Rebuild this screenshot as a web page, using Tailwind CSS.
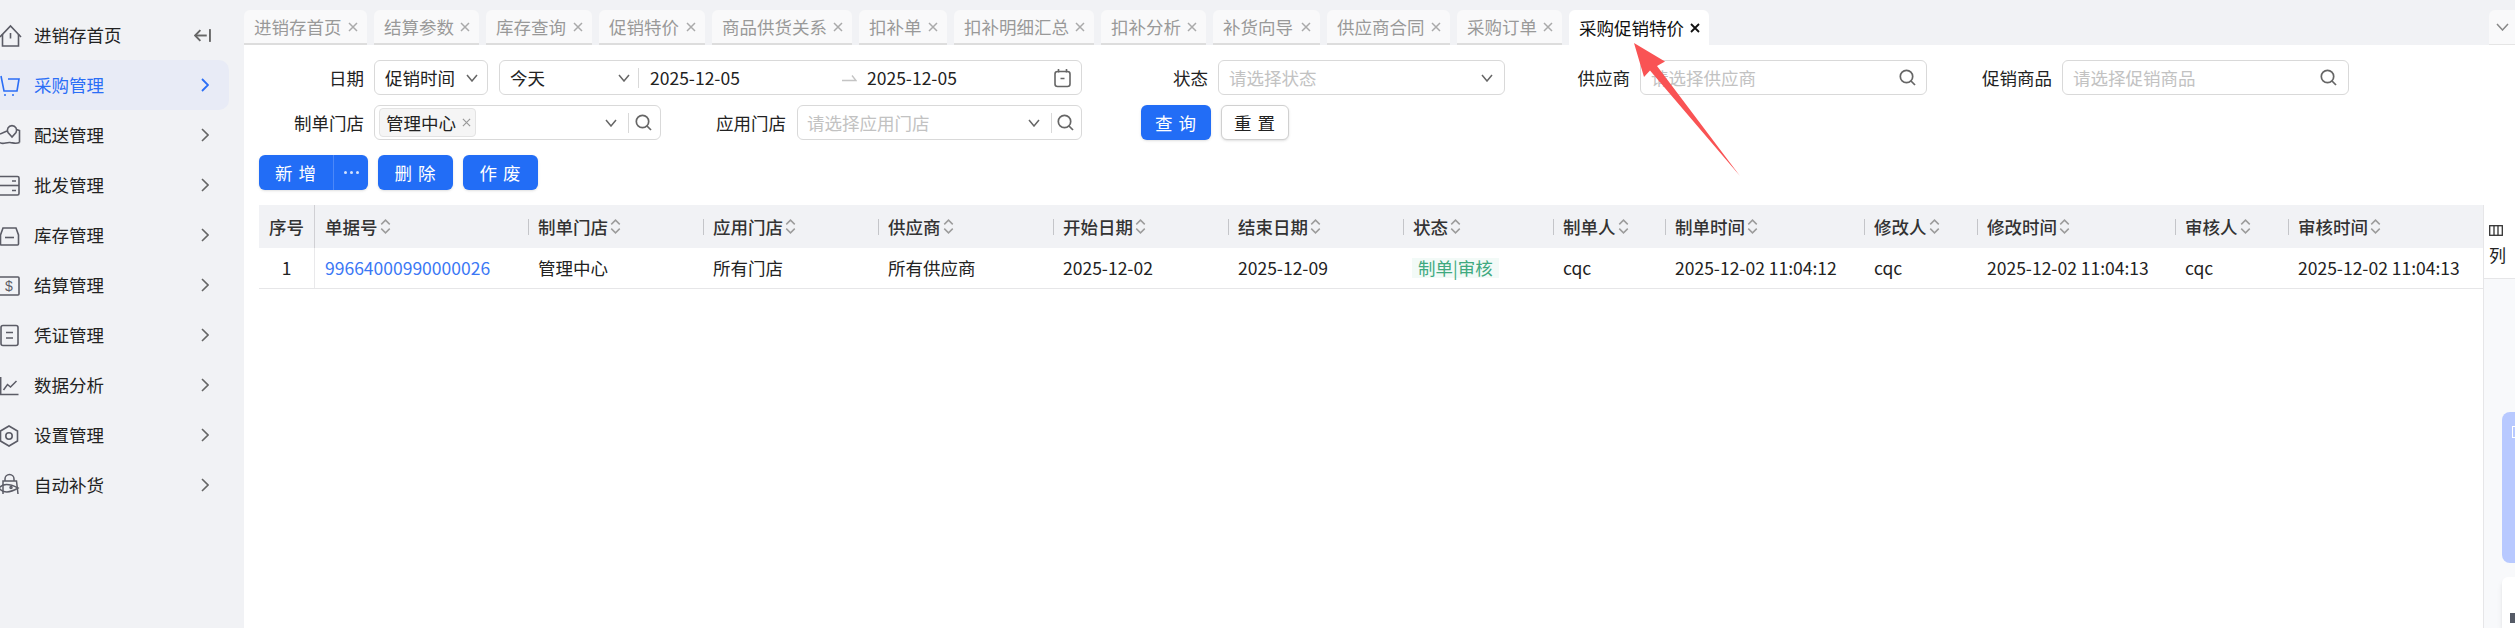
<!DOCTYPE html>
<html lang="zh">
<head>
<meta charset="utf-8">
<script src="https://cdn.jsdelivr.net/npm/@tailwindcss/browser@4"></script>
<title>采购促销特价</title>
</head>
<body class="bg-white">
<div class="relative flex w-[2515px] h-[628px] overflow-hidden bg-white text-[17.5px] leading-none text-[#222] [font-family:'Noto_Sans_CJK_SC',sans-serif]">

  <!-- Sidebar -->
  <aside class="w-[244px] shrink-0 h-full bg-[#f1f2f5] pt-[10px]">
    <div class="flex items-center h-[50px] w-[229px] pr-[18px]">
      <svg class="w-[24px] h-[24px] mr-[10px] overflow-visible" viewBox="0 0 24 24" fill="none" stroke="#5b5c66" stroke-width="1.6"><path d="M0 14 L10.5 3 L21 14"/><path d="M2.5 11 V23 H18.5 V11"/><path d="M10.5 10 v5.5"/></svg>
      <span class="flex-1">进销存首页</span>
      <svg class="w-[17px] h-[15px]" viewBox="0 0 16 14" fill="none" stroke="#666" stroke-width="1.8"><path d="M15 1 V13"/><path d="M12 7 H1"/><path d="M6 2 L1 7 L6 12"/></svg>
    </div>
    <div class="flex items-center h-[50px] w-[229px] pr-[20px] bg-[#e8ebf6] rounded-r-[10px] text-[#2b6ef6]">
      <svg class="w-[24px] h-[24px] mr-[10px] overflow-visible" viewBox="0 0 24 24" fill="none" stroke="#2b6ef6" stroke-width="1.6"><path d="M1 3 L4 18 H17 L19 6 H8"/><circle cx="5" cy="22" r="1" fill="#2b6ef6" stroke="none"/><circle cx="13" cy="22" r="1" fill="#2b6ef6" stroke="none"/></svg>
      <span class="flex-1">采购管理</span>
      <svg class="w-[8px] h-[14px]" viewBox="0 0 8 14" fill="none" stroke="#2b6ef6" stroke-width="1.8"><path d="M1 1 L7 7 L1 13"/></svg>
    </div>
    <div class="flex items-center h-[50px] w-[229px] pr-[20px]">
      <svg class="w-[24px] h-[24px] mr-[10px] overflow-visible" viewBox="0 0 24 24" fill="none" stroke="#5b5c66" stroke-width="1.6"><path d="M0 11 L7 8"/><path d="M16.5 6.5 L19.5 7.5 V19.5"/><path d="M0 19.5 C3 22 6 19 10 19.5 S16 21 19.5 19.5"/><path d="M12 14 L8 9.5 A4.6 4.6 0 1 1 16 9.5 Z"/></svg>
      <span class="flex-1">配送管理</span>
      <svg class="w-[8px] h-[14px]" viewBox="0 0 8 14" fill="none" stroke="#666" stroke-width="1.6"><path d="M1 1 L7 7 L1 13"/></svg>
    </div>
    <div class="flex items-center h-[50px] w-[229px] pr-[20px]">
      <svg class="w-[24px] h-[24px] mr-[10px] overflow-visible" viewBox="0 0 24 24" fill="none" stroke="#5b5c66" stroke-width="1.6"><rect x="-3" y="3.5" width="22" height="18.5" rx="1.5"/><path d="M-3 12.5 H19"/><path d="M12 8 h4 M12 17.5 h4"/></svg>
      <span class="flex-1">批发管理</span>
      <svg class="w-[8px] h-[14px]" viewBox="0 0 8 14" fill="none" stroke="#666" stroke-width="1.6"><path d="M1 1 L7 7 L1 13"/></svg>
    </div>
    <div class="flex items-center h-[50px] w-[229px] pr-[20px]">
      <svg class="w-[24px] h-[24px] mr-[10px] overflow-visible" viewBox="0 0 24 24" fill="none" stroke="#5b5c66" stroke-width="1.6"><path d="M0.5 12 L3 5 H16 L18.5 12 V21 A1 1 0 0 1 17.5 22 H1.5 A1 1 0 0 1 0.5 21 Z"/><path d="M5 14.5 H14"/></svg>
      <span class="flex-1">库存管理</span>
      <svg class="w-[8px] h-[14px]" viewBox="0 0 8 14" fill="none" stroke="#666" stroke-width="1.6"><path d="M1 1 L7 7 L1 13"/></svg>
    </div>
    <div class="flex items-center h-[50px] w-[229px] pr-[20px]">
      <svg class="w-[24px] h-[24px] mr-[10px] overflow-visible" viewBox="0 0 24 24" fill="none" stroke="#5b5c66" stroke-width="1.6"><rect x="-3" y="4" width="22" height="18" rx="1"/><text x="9" y="18" text-anchor="middle" font-size="14" font-family="Liberation Sans" fill="#5b5c66" stroke="none">$</text></svg>
      <span class="flex-1">结算管理</span>
      <svg class="w-[8px] h-[14px]" viewBox="0 0 8 14" fill="none" stroke="#666" stroke-width="1.6"><path d="M1 1 L7 7 L1 13"/></svg>
    </div>
    <div class="flex items-center h-[50px] w-[229px] pr-[20px]">
      <svg class="w-[24px] h-[24px] mr-[10px] overflow-visible" viewBox="0 0 24 24" fill="none" stroke="#5b5c66" stroke-width="1.6"><rect x="1" y="2.5" width="17" height="20" rx="2"/><path d="M6 9.5 H13 M6 15 H13"/></svg>
      <span class="flex-1">凭证管理</span>
      <svg class="w-[8px] h-[14px]" viewBox="0 0 8 14" fill="none" stroke="#666" stroke-width="1.6"><path d="M1 1 L7 7 L1 13"/></svg>
    </div>
    <div class="flex items-center h-[50px] w-[229px] pr-[20px]">
      <svg class="w-[24px] h-[24px] mr-[10px] overflow-visible" viewBox="0 0 24 24" fill="none" stroke="#5b5c66" stroke-width="1.5"><path d="M0.7 4 V21.5 H18.5"/><path d="M3.5 17 L7.5 11.5 L10.5 14 L16.5 8"/></svg>
      <span class="flex-1">数据分析</span>
      <svg class="w-[8px] h-[14px]" viewBox="0 0 8 14" fill="none" stroke="#666" stroke-width="1.6"><path d="M1 1 L7 7 L1 13"/></svg>
    </div>
    <div class="flex items-center h-[50px] w-[229px] pr-[20px]">
      <svg class="w-[24px] h-[24px] mr-[10px] overflow-visible" viewBox="0 0 24 24" fill="none" stroke="#5b5c66" stroke-width="1.6"><path d="M9 3 L17.5 8 V18 L9 23 L0.5 18 V8 Z"/><circle cx="9" cy="13" r="3.2"/></svg>
      <span class="flex-1">设置管理</span>
      <svg class="w-[8px] h-[14px]" viewBox="0 0 8 14" fill="none" stroke="#666" stroke-width="1.6"><path d="M1 1 L7 7 L1 13"/></svg>
    </div>
    <div class="flex items-center h-[50px] w-[229px] pr-[20px]">
      <svg class="w-[24px] h-[24px] mr-[10px] overflow-visible" viewBox="0 0 24 24" fill="none" stroke="#5b5c66" stroke-width="1.5"><path d="M5 8 V6 A4.5 4.5 0 0 1 14 6 V8"/><path d="M3 21 V8 H16.5 L18 21"/><path d="M-1 15 C3 10 10 11 18 15 C10 20 3 20 -1 15 Z"/><circle cx="11" cy="14.5" r="1"/></svg>
      <span class="flex-1">自动补货</span>
      <svg class="w-[8px] h-[14px]" viewBox="0 0 8 14" fill="none" stroke="#666" stroke-width="1.6"><path d="M1 1 L7 7 L1 13"/></svg>
    </div>
  </aside>

  <!-- Main -->
  <main class="flex-1 min-w-0 flex flex-col h-full">
    <!-- Tabs -->
    <div class="flex items-end h-[45px] shrink-0 gap-[7px] bg-[#f1f2f5] text-[#999]">
      <div class="flex items-center justify-between w-[123px] h-[35px] pl-[10px] pr-[9px] bg-[#f9f9fa] rounded-t-[6px] border-b-2 border-[#dddddd]"><span>进销存首页</span><svg class="w-[10px] h-[10px]" viewBox="0 0 10 10" stroke="#aaa" stroke-width="1.5"><path d="M1 1 L9 9 M9 1 L1 9"/></svg></div>
      <div class="flex items-center justify-between w-[105px] h-[35px] pl-[10px] pr-[9px] bg-[#f9f9fa] rounded-t-[6px] border-b-2 border-[#dddddd]"><span>结算参数</span><svg class="w-[10px] h-[10px]" viewBox="0 0 10 10" stroke="#aaa" stroke-width="1.5"><path d="M1 1 L9 9 M9 1 L1 9"/></svg></div>
      <div class="flex items-center justify-between w-[106px] h-[35px] pl-[10px] pr-[9px] bg-[#f9f9fa] rounded-t-[6px] border-b-2 border-[#dddddd]"><span>库存查询</span><svg class="w-[10px] h-[10px]" viewBox="0 0 10 10" stroke="#aaa" stroke-width="1.5"><path d="M1 1 L9 9 M9 1 L1 9"/></svg></div>
      <div class="flex items-center justify-between w-[106px] h-[35px] pl-[10px] pr-[9px] bg-[#f9f9fa] rounded-t-[6px] border-b-2 border-[#dddddd]"><span>促销特价</span><svg class="w-[10px] h-[10px]" viewBox="0 0 10 10" stroke="#aaa" stroke-width="1.5"><path d="M1 1 L9 9 M9 1 L1 9"/></svg></div>
      <div class="flex items-center justify-between w-[140px] h-[35px] pl-[10px] pr-[9px] bg-[#f9f9fa] rounded-t-[6px] border-b-2 border-[#dddddd]"><span>商品供货关系</span><svg class="w-[10px] h-[10px]" viewBox="0 0 10 10" stroke="#aaa" stroke-width="1.5"><path d="M1 1 L9 9 M9 1 L1 9"/></svg></div>
      <div class="flex items-center justify-between w-[88px] h-[35px] pl-[10px] pr-[9px] bg-[#f9f9fa] rounded-t-[6px] border-b-2 border-[#dddddd]"><span>扣补单</span><svg class="w-[10px] h-[10px]" viewBox="0 0 10 10" stroke="#aaa" stroke-width="1.5"><path d="M1 1 L9 9 M9 1 L1 9"/></svg></div>
      <div class="flex items-center justify-between w-[140px] h-[35px] pl-[10px] pr-[9px] bg-[#f9f9fa] rounded-t-[6px] border-b-2 border-[#dddddd]"><span>扣补明细汇总</span><svg class="w-[10px] h-[10px]" viewBox="0 0 10 10" stroke="#aaa" stroke-width="1.5"><path d="M1 1 L9 9 M9 1 L1 9"/></svg></div>
      <div class="flex items-center justify-between w-[105px] h-[35px] pl-[10px] pr-[9px] bg-[#f9f9fa] rounded-t-[6px] border-b-2 border-[#dddddd]"><span>扣补分析</span><svg class="w-[10px] h-[10px]" viewBox="0 0 10 10" stroke="#aaa" stroke-width="1.5"><path d="M1 1 L9 9 M9 1 L1 9"/></svg></div>
      <div class="flex items-center justify-between w-[107px] h-[35px] pl-[10px] pr-[9px] bg-[#f9f9fa] rounded-t-[6px] border-b-2 border-[#dddddd]"><span>补货向导</span><svg class="w-[10px] h-[10px]" viewBox="0 0 10 10" stroke="#aaa" stroke-width="1.5"><path d="M1 1 L9 9 M9 1 L1 9"/></svg></div>
      <div class="flex items-center justify-between w-[123px] h-[35px] pl-[10px] pr-[9px] bg-[#f9f9fa] rounded-t-[6px] border-b-2 border-[#dddddd]"><span>供应商合同</span><svg class="w-[10px] h-[10px]" viewBox="0 0 10 10" stroke="#aaa" stroke-width="1.5"><path d="M1 1 L9 9 M9 1 L1 9"/></svg></div>
      <div class="flex items-center justify-between w-[105px] h-[35px] pl-[10px] pr-[9px] bg-[#f9f9fa] rounded-t-[6px] border-b-2 border-[#dddddd]"><span>采购订单</span><svg class="w-[10px] h-[10px]" viewBox="0 0 10 10" stroke="#aaa" stroke-width="1.5"><path d="M1 1 L9 9 M9 1 L1 9"/></svg></div>
      <div class="flex items-center justify-between w-[140px] h-[35px] pl-[10px] pr-[9px] bg-white rounded-t-[6px] text-[#111]"><span>采购促销特价</span><svg class="w-[10px] h-[10px]" viewBox="0 0 10 10" stroke="#111" stroke-width="1.8"><path d="M1 1 L9 9 M9 1 L1 9"/></svg></div>
      <div class="flex items-center justify-center ml-auto w-[26px] h-[35px] bg-[#f9f9fa] rounded-tl-[6px] border-b border-[#e5e5e5]"><svg class="w-[13px] h-[8px]" viewBox="0 0 13 8" fill="none" stroke="#888" stroke-width="1.5"><path d="M1 1 L6.5 7 L12 1"/></svg></div>
    </div>

    <!-- Filter row 1 -->
    <div class="flex items-center h-[35px] mt-[15px] shrink-0">
      <label class="w-[120px] text-right mr-[10px]">日期</label>
      <div class="flex items-center justify-between w-[114px] h-[35px] pl-[10px] pr-[9px] border border-[#d9d9d9] rounded-[6px]"><span>促销时间</span><svg class="w-[12px] h-[8px]" viewBox="0 0 12 8" fill="none" stroke="#666" stroke-width="1.5"><path d="M1 1 L6 7 L11 1"/></svg></div>
      <div class="flex items-center w-[583px] h-[35px] ml-[11px] pl-[10px] pr-[10px] border border-[#d9d9d9] rounded-[6px]">
        <span class="w-[108px]">今天</span>
        <svg class="w-[12px] h-[8px]" viewBox="0 0 12 8" fill="none" stroke="#666" stroke-width="1.5"><path d="M1 1 L6 7 L11 1"/></svg>
        <span class="w-px h-[20px] bg-[#d9d9d9] ml-[8px] mr-[11px]"></span>
        <span class="w-[192px]">2025-12-05</span>
        <svg class="w-[15px] h-[8px] mr-[10px]" viewBox="0 0 15 8" fill="none" stroke="#c4c4c4" stroke-width="1.4"><path d="M0 6.5 H14 L10 1.5"/></svg>
        <span class="flex-1">2025-12-05</span>
        <svg class="w-[17px] h-[20px]" viewBox="0 0 17 20" fill="none" stroke="#666" stroke-width="1.6"><rect x="1" y="3.5" width="15" height="15" rx="2.5"/><path d="M4.5 1 V4.5 M12.5 1 V4.5 M6.5 10.5 H10.5"/></svg>
      </div>
      <label class="w-[126px] text-right mr-[10px]">状态</label>
      <div class="flex items-center justify-between w-[287px] h-[35px] pl-[10px] pr-[11px] border border-[#d9d9d9] rounded-[6px] text-[#c2c2c2]"><span>请选择状态</span><svg class="w-[12px] h-[8px]" viewBox="0 0 12 8" fill="none" stroke="#666" stroke-width="1.5"><path d="M1 1 L6 7 L11 1"/></svg></div>
      <label class="w-[125px] text-right mr-[10px]">供应商</label>
      <div class="flex items-center justify-between w-[287px] h-[35px] pl-[10px] pr-[10px] border border-[#d9d9d9] rounded-[6px] text-[#c2c2c2]"><span>请选择供应商</span><svg class="w-[17px] h-[17px]" viewBox="0 0 17 17" fill="none" stroke="#666" stroke-width="1.7"><circle cx="7.5" cy="7.5" r="6.2"/><path d="M12 12 L16 16"/></svg></div>
      <label class="w-[125px] text-right mr-[10px]">促销商品</label>
      <div class="flex items-center justify-between w-[287px] h-[35px] pl-[10px] pr-[11px] border border-[#d9d9d9] rounded-[6px] text-[#c2c2c2]"><span>请选择促销商品</span><svg class="w-[17px] h-[17px]" viewBox="0 0 17 17" fill="none" stroke="#666" stroke-width="1.7"><circle cx="7.5" cy="7.5" r="6.2"/><path d="M12 12 L16 16"/></svg></div>
    </div>

    <!-- Filter row 2 -->
    <div class="flex items-center h-[35px] mt-[10px] shrink-0">
      <label class="w-[120px] text-right mr-[10px]">制单门店</label>
      <div class="flex items-center w-[287px] h-[35px] pl-[4px] pr-[8px] border border-[#d9d9d9] rounded-[6px]">
        <span class="flex items-center justify-between w-[97px] h-[29px] pl-[6px] pr-[4px] bg-[#f5f5f5] border border-[#e3e3e3] rounded-[4px]"><span>管理中心</span><svg class="w-[9px] h-[9px]" viewBox="0 0 10 10" stroke="#999" stroke-width="1.3"><path d="M1 1 L9 9 M9 1 L1 9"/></svg></span>
        <svg class="w-[12px] h-[8px] ml-auto" viewBox="0 0 12 8" fill="none" stroke="#666" stroke-width="1.5"><path d="M1 1 L6 7 L11 1"/></svg>
        <span class="w-px h-[20px] bg-[#d9d9d9] ml-[11px] mr-[6px]"></span>
        <svg class="w-[17px] h-[17px]" viewBox="0 0 17 17" fill="none" stroke="#666" stroke-width="1.7"><circle cx="7.5" cy="7.5" r="6.2"/><path d="M12 12 L16 16"/></svg>
      </div>
      <label class="w-[125px] text-right mr-[11px]">应用门店</label>
      <div class="flex items-center w-[285px] h-[35px] pl-[9px] pr-[7px] border border-[#d9d9d9] rounded-[6px] text-[#c2c2c2]">
        <span>请选择应用门店</span>
        <svg class="w-[12px] h-[8px] ml-auto" viewBox="0 0 12 8" fill="none" stroke="#666" stroke-width="1.5"><path d="M1 1 L6 7 L11 1"/></svg>
        <span class="w-px h-[20px] bg-[#d9d9d9] ml-[11px] mr-[5px]"></span>
        <svg class="w-[17px] h-[17px]" viewBox="0 0 17 17" fill="none" stroke="#666" stroke-width="1.7"><circle cx="7.5" cy="7.5" r="6.2"/><path d="M12 12 L16 16"/></svg>
      </div>
      <button class="w-[70px] h-[35px] ml-[59px] bg-[#226df6] text-white rounded-[6px] shadow-sm tracking-[1px]">查 询</button>
      <button class="w-[68px] h-[35px] ml-[10px] bg-white border border-[#d0d0d0] rounded-[6px] text-[#222] shadow-sm tracking-[1px]">重 置</button>
    </div>

    <!-- Action buttons -->
    <div class="flex items-center h-[35px] mt-[15px] pl-[15px] shrink-0 text-white">
      <div class="flex w-[109px] h-[35px] bg-[#226df6] rounded-[6px] shadow-sm">
        <button class="w-[75px] h-full border-r border-[#4c88f8] tracking-[1px]">新 增</button>
        <button class="flex-1 flex items-center justify-center gap-[3px]" aria-label="更多"><span class="w-[3px] h-[3px] rounded-full bg-white/80"></span><span class="w-[3px] h-[3px] rounded-full bg-white/80"></span><span class="w-[3px] h-[3px] rounded-full bg-white/80"></span></button>
      </div>
      <button class="w-[75px] h-[35px] ml-[10px] bg-[#226df6] rounded-[6px] shadow-sm tracking-[1px]">删 除</button>
      <button class="w-[75px] h-[35px] ml-[10px] bg-[#226df6] rounded-[6px] shadow-sm tracking-[1px]">作 废</button>
    </div>

    <!-- Table + right panel -->
    <div class="flex flex-1 min-h-0 mt-[15px]">
      <div class="flex-1 min-w-0 pl-[15px]">
        <div class="grid grid-cols-[56px_213px_175px_175px_175px_175px_175px_150px_112px_199px_113px_198px_113px_195px] h-[43px] bg-[#f1f2f5] font-medium text-[#333]">
          <div class="flex items-center justify-center border-r border-[#d0d0d4]">序号</div>
          <div class="flex items-center pl-[10px]"><span>单据号</span><svg class="w-[11px] h-[17px] ml-[2px]" viewBox="0 0 10 16" fill="none" stroke="#9c9c9c" stroke-width="1.4"><path d="M1 6 L5 2 L9 6 M1 10 L5 14 L9 10"/></svg></div>
          <div class="flex items-center"><div class="flex items-center h-[16px] pl-[9px] border-l border-[#c4c5c9]"><span>制单门店</span><svg class="w-[11px] h-[17px] ml-[2px]" viewBox="0 0 10 16" fill="none" stroke="#9c9c9c" stroke-width="1.4"><path d="M1 6 L5 2 L9 6 M1 10 L5 14 L9 10"/></svg></div></div>
          <div class="flex items-center"><div class="flex items-center h-[16px] pl-[9px] border-l border-[#c4c5c9]"><span>应用门店</span><svg class="w-[11px] h-[17px] ml-[2px]" viewBox="0 0 10 16" fill="none" stroke="#9c9c9c" stroke-width="1.4"><path d="M1 6 L5 2 L9 6 M1 10 L5 14 L9 10"/></svg></div></div>
          <div class="flex items-center"><div class="flex items-center h-[16px] pl-[9px] border-l border-[#c4c5c9]"><span>供应商</span><svg class="w-[11px] h-[17px] ml-[2px]" viewBox="0 0 10 16" fill="none" stroke="#9c9c9c" stroke-width="1.4"><path d="M1 6 L5 2 L9 6 M1 10 L5 14 L9 10"/></svg></div></div>
          <div class="flex items-center"><div class="flex items-center h-[16px] pl-[9px] border-l border-[#c4c5c9]"><span>开始日期</span><svg class="w-[11px] h-[17px] ml-[2px]" viewBox="0 0 10 16" fill="none" stroke="#9c9c9c" stroke-width="1.4"><path d="M1 6 L5 2 L9 6 M1 10 L5 14 L9 10"/></svg></div></div>
          <div class="flex items-center"><div class="flex items-center h-[16px] pl-[9px] border-l border-[#c4c5c9]"><span>结束日期</span><svg class="w-[11px] h-[17px] ml-[2px]" viewBox="0 0 10 16" fill="none" stroke="#9c9c9c" stroke-width="1.4"><path d="M1 6 L5 2 L9 6 M1 10 L5 14 L9 10"/></svg></div></div>
          <div class="flex items-center"><div class="flex items-center h-[16px] pl-[9px] border-l border-[#c4c5c9]"><span>状态</span><svg class="w-[11px] h-[17px] ml-[2px]" viewBox="0 0 10 16" fill="none" stroke="#9c9c9c" stroke-width="1.4"><path d="M1 6 L5 2 L9 6 M1 10 L5 14 L9 10"/></svg></div></div>
          <div class="flex items-center"><div class="flex items-center h-[16px] pl-[9px] border-l border-[#c4c5c9]"><span>制单人</span><svg class="w-[11px] h-[17px] ml-[2px]" viewBox="0 0 10 16" fill="none" stroke="#9c9c9c" stroke-width="1.4"><path d="M1 6 L5 2 L9 6 M1 10 L5 14 L9 10"/></svg></div></div>
          <div class="flex items-center"><div class="flex items-center h-[16px] pl-[9px] border-l border-[#c4c5c9]"><span>制单时间</span><svg class="w-[11px] h-[17px] ml-[2px]" viewBox="0 0 10 16" fill="none" stroke="#9c9c9c" stroke-width="1.4"><path d="M1 6 L5 2 L9 6 M1 10 L5 14 L9 10"/></svg></div></div>
          <div class="flex items-center"><div class="flex items-center h-[16px] pl-[9px] border-l border-[#c4c5c9]"><span>修改人</span><svg class="w-[11px] h-[17px] ml-[2px]" viewBox="0 0 10 16" fill="none" stroke="#9c9c9c" stroke-width="1.4"><path d="M1 6 L5 2 L9 6 M1 10 L5 14 L9 10"/></svg></div></div>
          <div class="flex items-center"><div class="flex items-center h-[16px] pl-[9px] border-l border-[#c4c5c9]"><span>修改时间</span><svg class="w-[11px] h-[17px] ml-[2px]" viewBox="0 0 10 16" fill="none" stroke="#9c9c9c" stroke-width="1.4"><path d="M1 6 L5 2 L9 6 M1 10 L5 14 L9 10"/></svg></div></div>
          <div class="flex items-center"><div class="flex items-center h-[16px] pl-[9px] border-l border-[#c4c5c9]"><span>审核人</span><svg class="w-[11px] h-[17px] ml-[2px]" viewBox="0 0 10 16" fill="none" stroke="#9c9c9c" stroke-width="1.4"><path d="M1 6 L5 2 L9 6 M1 10 L5 14 L9 10"/></svg></div></div>
          <div class="flex items-center"><div class="flex items-center h-[16px] pl-[9px] border-l border-[#c4c5c9]"><span>审核时间</span><svg class="w-[11px] h-[17px] ml-[2px]" viewBox="0 0 10 16" fill="none" stroke="#9c9c9c" stroke-width="1.4"><path d="M1 6 L5 2 L9 6 M1 10 L5 14 L9 10"/></svg></div></div>
        </div>
        <div class="grid grid-cols-[56px_213px_175px_175px_175px_175px_175px_150px_112px_199px_113px_198px_113px_195px] h-[41px] border-b border-[#e6e6e8] whitespace-nowrap">
          <div class="flex items-center justify-center border-r border-[#e9e9eb]">1</div>
          <div class="flex items-center pl-[10px] text-[#3b78f5]">99664000990000026</div>
          <div class="flex items-center pl-[10px]">管理中心</div>
          <div class="flex items-center pl-[10px]">所有门店</div>
          <div class="flex items-center pl-[10px]">所有供应商</div>
          <div class="flex items-center pl-[10px]">2025-12-02</div>
          <div class="flex items-center pl-[10px]">2025-12-09</div>
          <div class="flex items-center pl-[9px]"><span class="px-[6px] py-[1px] bg-[#f2faf7] text-[#3fa97f]">制单|审核</span></div>
          <div class="flex items-center pl-[10px]">cqc</div>
          <div class="flex items-center pl-[10px]">2025-12-02 11:04:12</div>
          <div class="flex items-center pl-[10px]">cqc</div>
          <div class="flex items-center pl-[10px]">2025-12-02 11:04:13</div>
          <div class="flex items-center pl-[10px]">cqc</div>
          <div class="flex items-center pl-[10px]">2025-12-02 11:04:13</div>
        </div>
      </div>
      <!-- Right panel -->
      <div class="w-[32px] shrink-0 h-full bg-[#f8f9fb] border-l border-[#e6e6e8]">
        <div class="flex flex-col h-[74px] pl-[5px] pt-[20px] bg-white border-b border-[#e6e6e8]">
          <svg class="w-[14px] h-[11px] mb-[10px]" viewBox="0 0 14 11" fill="none" stroke="#333" stroke-width="1.3"><rect x="0.7" y="0.7" width="12.6" height="9.6"/><path d="M5 0.7 V10.3 M9 0.7 V10.3"/></svg>
          <span class="text-[17px]">列</span>
        </div>
      </div>
    </div>
  </main>

  <!-- Floating right-edge widgets -->
  <div class="absolute right-0 top-[412px] w-[13px] h-[151px] pl-[10px] pt-[14px] rounded-l-[8px] bg-[#b8c9ff]"><div class="w-[6px] h-[12px] border border-white"></div></div>
  <div class="absolute right-0 top-[577px] w-[13px] h-[51px] pl-[8px] pt-[36px] rounded-tl-[6px] bg-white shadow-md"><div class="w-[5px] h-[10px] bg-[#555a66]"></div></div>

  <!-- Red annotation arrow -->
  <svg class="absolute left-[1620px] top-[30px] w-[130px] h-[160px] pointer-events-none" viewBox="0 0 130 160">
    <polygon points="14,13 45,31.5 37,36 120,146 30,40.5 24,47" fill="#f95354"/>
  </svg>
</div>
</body>
</html>
